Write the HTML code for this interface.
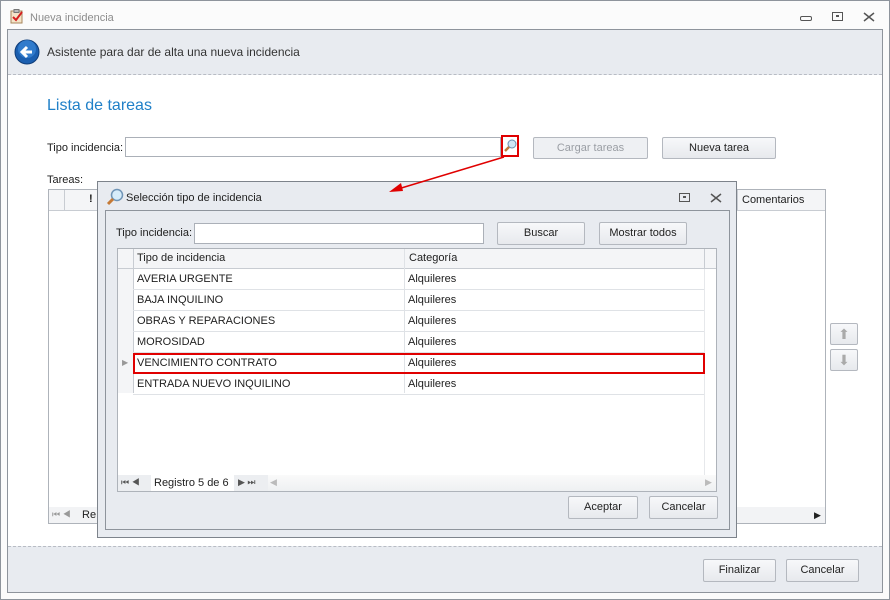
<!DOCTYPE html>
<html><head><meta charset="utf-8"><style>
*{box-sizing:border-box;margin:0;padding:0}
body{width:890px;height:600px;position:relative;background:#fff;font-family:"Liberation Sans",sans-serif;font-size:11px;color:#1e1e1e;overflow:hidden}
.a{position:absolute}
.btn{position:absolute;border:1px solid #b4b8bf;border-radius:2px;background:linear-gradient(#f7f8fa,#e7e9ed);text-align:center;font-size:11px;line-height:21px;color:#222}
.inp{position:absolute;border:1px solid #abb0b8;background:#fff}
.row{position:absolute;left:0;width:100%;height:21px;border-bottom:1px solid #dfe2e6;line-height:21px}
.row span{position:absolute}
</style></head><body>
<div class="a" style="left:0;top:0;width:890px;height:600px;border:1px solid #8e949c;background:#fbfbfb"></div>
<svg class="a" style="left:10px;top:9px" width="14" height="15"><rect x="1" y="2" width="11" height="12" fill="#f4e4c8" stroke="#a7865c"/><rect x="4" y="0.5" width="5" height="3" fill="#bbb" stroke="#777"/><path d="M3 8 L6 11 L12 3" stroke="#d42020" stroke-width="2" fill="none"/></svg>
<div class="a" style="left:30px;top:12px;color:#8c8c8c;font-size:11px">Nueva incidencia</div>
<div class="a" style="left:800px;top:16px;width:12px;height:5px;border:1px solid #555;border-radius:2px"></div>
<div class="a" style="left:832px;top:12px;width:11px;height:9px;border:1px solid #555"><div style="margin:2px 0 0 3px;width:3px;height:2px;border:1px solid #555"></div></div>
<svg class="a" style="left:863px;top:12px" width="12" height="10"><path d="M1 1L11 9M11 1L1 9" stroke="#555" stroke-width="1.5"/></svg>
<div class="a" style="left:7px;top:29px;width:876px;height:564px;border:1px solid #8e949c;background:#fff"></div>
<div class="a" style="left:8px;top:30px;width:874px;height:45px;background:#e8ebf0;border-bottom:1px dashed #b8bcc4"></div>
<svg class="a" style="left:14px;top:39px" width="26" height="26"><circle cx="13" cy="13" r="12" fill="#1b5fb0" stroke="#0e3c78"/><circle cx="13" cy="10" r="9" fill="#3f8ee0" opacity=".6"/><path d="M18 13H9M13 8L8 13L13 18" stroke="#fff" stroke-width="3" fill="none"/></svg>
<div class="a" style="left:47px;top:45px;font-size:12px;color:#333">Asistente para dar de alta una nueva incidencia</div>
<div class="a" style="left:47px;top:97px;font-size:16px;color:#2080c8">Lista de tareas</div>
<div class="a" style="left:47px;top:142px">Tipo incidencia:</div>
<div class="inp" style="left:125px;top:137px;width:376px;height:20px"></div>
<div class="a" style="left:501px;top:135px;width:18px;height:22px;border:2px solid #e00000;background:#fff"></div>
<svg class="a" style="left:504px;top:139px" width="13" height="13"><circle cx="8" cy="5" r="4" fill="#cfe6f6" stroke="#6a8fb0"/><path d="M5 8L1 12" stroke="#c07a3a" stroke-width="2.5"/></svg>
<div class="btn" style="left:533px;top:137px;width:115px;height:22px;color:#9a9ea4;background:#eef0f3">Cargar tareas</div>
<div class="btn" style="left:662px;top:137px;width:114px;height:22px">Nueva tarea</div>
<div class="a" style="left:47px;top:174px">Tareas:</div>
<div class="a" style="left:48px;top:189px;width:778px;height:335px;border:1px solid #aeb3ba;background:#fff"></div>
<div class="a" style="left:49px;top:190px;width:776px;height:21px;background:#f4f5f7;border-bottom:1px solid #c8ccd2"></div>
<div class="a" style="left:64px;top:190px;width:1px;height:21px;background:#c8ccd2"></div>
<div class="a" style="left:89px;top:193px;font-weight:bold">!</div>
<div class="a" style="left:737px;top:190px;width:1px;height:21px;background:#c8ccd2"></div>
<div class="a" style="left:742px;top:194px">Comentarios</div>
<div class="a" style="left:49px;top:507px;width:776px;height:16px;background:#f2f3f5"></div>
<div class="a" style="left:52px;top:509px;font-size:9px;color:#999">⏮ ◀</div>
<div class="a" style="left:82px;top:509px">Re</div>
<div class="a" style="left:814px;top:510px;font-size:9px;color:#222">▶</div>
<div class="btn" style="left:830px;top:323px;width:28px;height:22px;color:#aaa;font-size:14px;line-height:20px">⬆</div>
<div class="btn" style="left:830px;top:349px;width:28px;height:22px;color:#aaa;font-size:14px;line-height:20px">⬇</div>
<div class="a" style="left:8px;top:546px;width:874px;height:46px;background:#e8ebf0;border-top:1px dashed #b8bcc4"></div>
<div class="btn" style="left:703px;top:559px;width:73px;height:23px">Finalizar</div>
<div class="btn" style="left:786px;top:559px;width:73px;height:23px">Cancelar</div>
<div class="a" style="left:97px;top:181px;width:640px;height:357px;border:1px solid #7d838b;background:#e8ebf0"></div>
<svg class="a" style="left:106px;top:188px" width="18" height="18"><circle cx="11" cy="7" r="5.5" fill="#d6ecfa" stroke="#6f94b6" stroke-width="1.5"/><path d="M7 11L2 16" stroke="#c57a36" stroke-width="3"/></svg>
<div class="a" style="left:126px;top:192px">Selección tipo de incidencia</div>
<div class="a" style="left:679px;top:193px;width:11px;height:9px;border:1px solid #555"><div style="margin:2px 0 0 3px;width:3px;height:2px;border:1px solid #555"></div></div>
<svg class="a" style="left:710px;top:193px" width="12" height="10"><path d="M1 1L11 9M11 1L1 9" stroke="#555" stroke-width="1.5"/></svg>
<div class="a" style="left:105px;top:210px;width:625px;height:320px;border:1px solid #8e949c;background:#e8ebf0"></div>
<div class="a" style="left:116px;top:227px">Tipo incidencia:</div>
<div class="inp" style="left:194px;top:223px;width:290px;height:21px"></div>
<div class="btn" style="left:497px;top:222px;width:88px;height:23px">Buscar</div>
<div class="btn" style="left:599px;top:222px;width:88px;height:23px">Mostrar todos</div>
<div class="a" style="left:117px;top:248px;width:600px;height:244px;border:1px solid #aeb3ba;background:#fff">
 <div class="a" style="left:0;top:0;width:598px;height:20px;background:#f4f5f7;border-bottom:1px solid #c8ccd2"></div>
 <div class="a" style="left:15px;top:0;width:1px;height:144px;background:#c8ccd2"></div>
 <div class="a" style="left:286px;top:0;width:1px;height:144px;background:#dfe2e6"></div>
 <div class="a" style="left:586px;top:0;width:1px;height:20px;background:#c8ccd2"></div>
 <div class="a" style="left:0;top:20px;width:15px;height:124px;background:#f4f5f7"></div>
 <div class="a" style="left:19px;top:3px">Tipo de incidencia</div>
 <div class="a" style="left:291px;top:3px">Categoría</div>
 <div class="a" style="left:586px;top:20px;width:12px;height:206px;background:#fff;border-left:1px solid #e6e8eb"></div>
 <div class="a" style="left:15px;top:20px;width:571px;height:126px">
  <div class="row" style="top:0"><span style="left:4px">AVERIA URGENTE</span><span style="left:275px">Alquileres</span></div>
  <div class="row" style="top:21px"><span style="left:4px">BAJA INQUILINO</span><span style="left:275px">Alquileres</span></div>
  <div class="row" style="top:42px"><span style="left:4px">OBRAS Y REPARACIONES</span><span style="left:275px">Alquileres</span></div>
  <div class="row" style="top:63px"><span style="left:4px">MOROSIDAD</span><span style="left:275px">Alquileres</span></div>
  <div class="row" style="top:84px"><span style="left:4px">VENCIMIENTO CONTRATO</span><span style="left:275px">Alquileres</span></div>
  <div class="row" style="top:105px"><span style="left:4px">ENTRADA NUEVO INQUILINO</span><span style="left:275px">Alquileres</span></div>
 </div>
 <div class="a" style="left:4px;top:109px;font-size:8px;color:#999">▶</div>
 <div class="a" style="left:0;top:226px;width:598px;height:16px;background:linear-gradient(#fafafa,#eef0f2)"></div>
 <div class="a" style="left:0;top:226px;width:33px;height:16px;background:#eceef1"></div>
 <div class="a" style="left:3px;top:228px;font-size:9px;color:#555">⏮ ◀</div>
 <div class="a" style="left:33px;top:226px;width:83px;height:16px;background:#fff;line-height:16px;padding-left:3px">Registro 5 de 6</div>
 <div class="a" style="left:116px;top:226px;width:34px;height:16px;background:#eceef1"></div>
 <div class="a" style="left:120px;top:228px;font-size:9px;color:#555">▶ ⏭</div>
 <div class="a" style="left:152px;top:228px;font-size:9px;color:#bbb">◀</div>
 <div class="a" style="left:587px;top:228px;font-size:9px;color:#bbb">▶</div>
</div>
<div class="a" style="left:133px;top:353px;width:572px;height:21px;border:2px solid #e00000"></div>
<div class="btn" style="left:568px;top:496px;width:70px;height:23px">Aceptar</div>
<div class="btn" style="left:649px;top:496px;width:69px;height:23px">Cancelar</div>
<svg class="a" style="left:0;top:0" width="890" height="600"><line x1="504" y1="157" x2="398" y2="189" stroke="#e00000" stroke-width="1.5"/><path d="M389 192L401 183L403 191Z" fill="#e00000"/></svg>
</body></html>
